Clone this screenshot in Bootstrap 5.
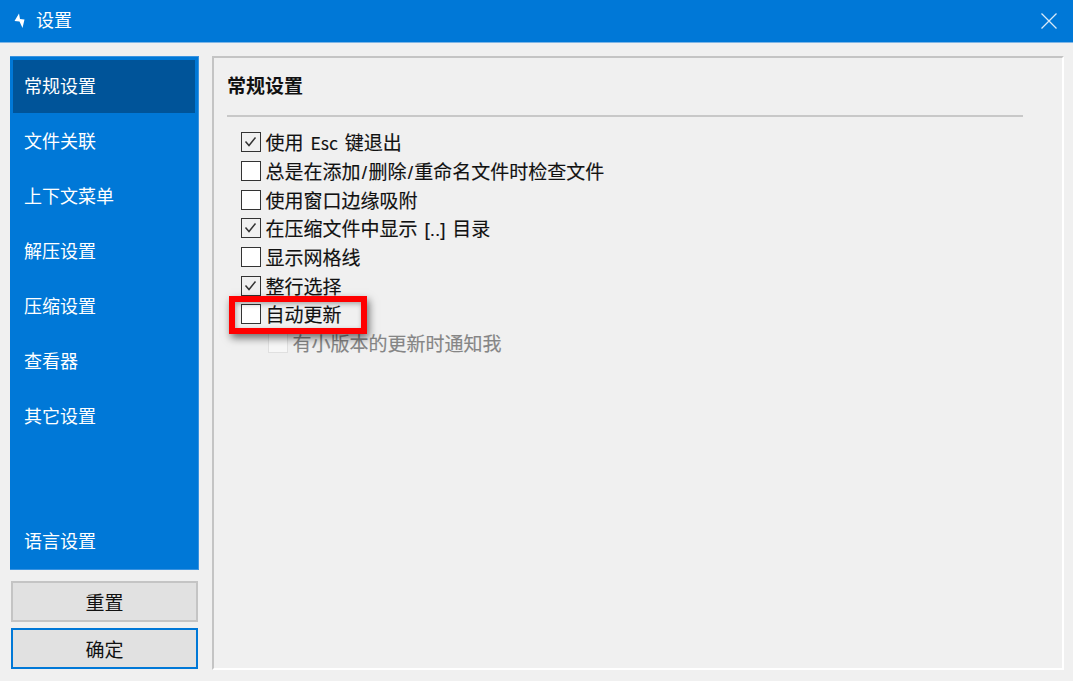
<!DOCTYPE html>
<html lang="zh">
<head>
<meta charset="utf-8">
<title>设置</title>
<link href="https://cdn.jsdelivr.net/npm/bootstrap@5.3.0/dist/css/bootstrap.min.css" rel="stylesheet">
<style>
html,body{height:681px;overflow:hidden}
body{background:#f0f0f0;font-family:"Liberation Sans","Noto Sans CJK SC",sans-serif;font-size:19px;color:#111}
.win-bar{height:43px;background:#0078d7;border-bottom:1px solid #7fb6e6;color:#fff;padding:0 16px 0 14px}
.win-title{margin-left:10px;line-height:1;font-size:18px}
.win-body{height:638px;padding:13px 9px 11px 10px;gap:13px}
.side-col{width:189px;flex:none}
.side-nav{height:514px;background:#0078d7;border:1px solid #3a93e0;border-width:1px 1px 1px 0}
.side-item{height:55px;margin:0 3px;padding:0 0 0 11px;color:#fff;line-height:1;font-size:18px}
.side-item.is-on{background:#005499;height:53px;margin:3px 3px 1px 3px}
.side-spacer{flex:1}
.act-btn{width:187px;height:41px;margin-left:1px;background:#e1e1e1;border:2px solid #c4c4c4;border-radius:0;font-size:19px;line-height:1;color:#111;padding:3px 0 0}
.act-btn:hover{background:#e1e1e1}
.act-first{margin-top:11px}
.act-second{margin-top:6px;border-color:#0078d7}
.main-panel{width:852px;height:614px;border-style:solid;border-width:2px;border-color:#c4c4c4 #fff #fff #c4c4c4;padding:0 0 0 13px;position:relative}
.panel-head{font-size:19px;font-weight:700;line-height:1;padding-top:19px;height:56.5px;margin:0;color:#111}
.panel-rule{width:796px;height:2px;background:#c8c8c8;margin:0 0 11.6px 0}
.opt-row{height:28.65px;padding-left:13.5px;gap:5px;line-height:1;white-space:pre;word-spacing:1.6px}
.opt-label{padding-top:3px;-webkit-text-stroke:.15px currentColor}
.opt-latin{font-family:"Noto Sans CJK SC",sans-serif;font-size:17.5px}
.opt-slash{margin:0 1.3px}
.opt-box{width:20px;height:20px;flex:none;border:1.5px solid #333;background:#fff}
.opt-box.is-on{background:#f0f0f0}
.opt-box svg{display:block}
.opt-sub{padding-left:40.5px;color:#858585}
.opt-sub .opt-box{border-color:#e0e0e0;background:#f7f7f7}
.mark-box{position:absolute;left:15px;top:238px;width:138px;height:37.5px;border:6px solid #f00;box-shadow:2px 4px 8px rgba(0,0,0,.55),inset 1px 2px 5px rgba(0,0,0,.3);pointer-events:none}
</style>
</head>
<body>
<div class="win-bar d-flex align-items-center">
  <svg width="12" height="16" viewBox="0 0 12 16" aria-hidden="true"><path d="M5 0.5 0.5 8 5.5 8.5 8.5 15 10.5 6.5 6 6Z" fill="#fff"/></svg>
  <span class="win-title flex-grow-1">设置</span>
  <svg width="16" height="16" viewBox="0 0 16 16" aria-hidden="true"><path d="M.5.5 15.500 15.500M15.500.5 .5 15.500" stroke="#d8e9f8" stroke-width="1.3" fill="none"/></svg>
</div>
<div class="win-body d-flex">
  <div class="side-col d-flex flex-column">
    <nav class="side-nav d-flex flex-column">
      <div class="side-item is-on d-flex align-items-center">常规设置</div>
      <div class="side-item d-flex align-items-center">文件关联</div>
      <div class="side-item d-flex align-items-center">上下文菜单</div>
      <div class="side-item d-flex align-items-center">解压设置</div>
      <div class="side-item d-flex align-items-center">压缩设置</div>
      <div class="side-item d-flex align-items-center">查看器</div>
      <div class="side-item d-flex align-items-center">其它设置</div>
      <div class="side-spacer"></div>
      <div class="side-item d-flex align-items-center">语言设置</div>
    </nav>
    <button type="button" class="btn act-btn act-first">重置</button>
    <button type="button" class="btn act-btn act-second">确定</button>
  </div>
  <main class="main-panel">
    <h1 class="panel-head">常规设置</h1>
    <div class="panel-rule"></div>
    <div class="opt-row d-flex align-items-center"><span class="opt-box is-on"><svg width="17" height="17" viewBox="0 0 17 17"><path d="M3.500 8.500 7 12.500 13.500 4.500" stroke="#333" stroke-width="1.500" fill="none"/></svg></span><span class="opt-label">使用 <span class="opt-latin">Esc</span> 键退出</span></div>
    <div class="opt-row d-flex align-items-center"><span class="opt-box"></span><span class="opt-label">总是在添加<span class="opt-slash">/</span>删除<span class="opt-slash">/</span>重命名文件时检查文件</span></div>
    <div class="opt-row d-flex align-items-center"><span class="opt-box"></span><span class="opt-label">使用窗口边缘吸附</span></div>
    <div class="opt-row d-flex align-items-center"><span class="opt-box is-on"><svg width="17" height="17" viewBox="0 0 17 17"><path d="M3.500 8.500 7 12.500 13.500 4.500" stroke="#333" stroke-width="1.500" fill="none"/></svg></span><span class="opt-label">在压缩文件中显示 [..] 目录</span></div>
    <div class="opt-row d-flex align-items-center"><span class="opt-box"></span><span class="opt-label">显示网格线</span></div>
    <div class="opt-row d-flex align-items-center"><span class="opt-box is-on"><svg width="17" height="17" viewBox="0 0 17 17"><path d="M3.500 8.500 7 12.500 13.500 4.500" stroke="#333" stroke-width="1.500" fill="none"/></svg></span><span class="opt-label">整行选择</span></div>
    <div class="opt-row d-flex align-items-center"><span class="opt-box"></span><span class="opt-label">自动更新</span></div>
    <div class="opt-row opt-sub d-flex align-items-center"><span class="opt-box"></span><span class="opt-label">有小版本的更新时通知我</span></div>
    <div class="mark-box"></div>
  </main>
</div>
<script src="https://cdn.jsdelivr.net/npm/bootstrap@5.3.0/dist/js/bootstrap.bundle.min.js"></script>
</body>
</html>
